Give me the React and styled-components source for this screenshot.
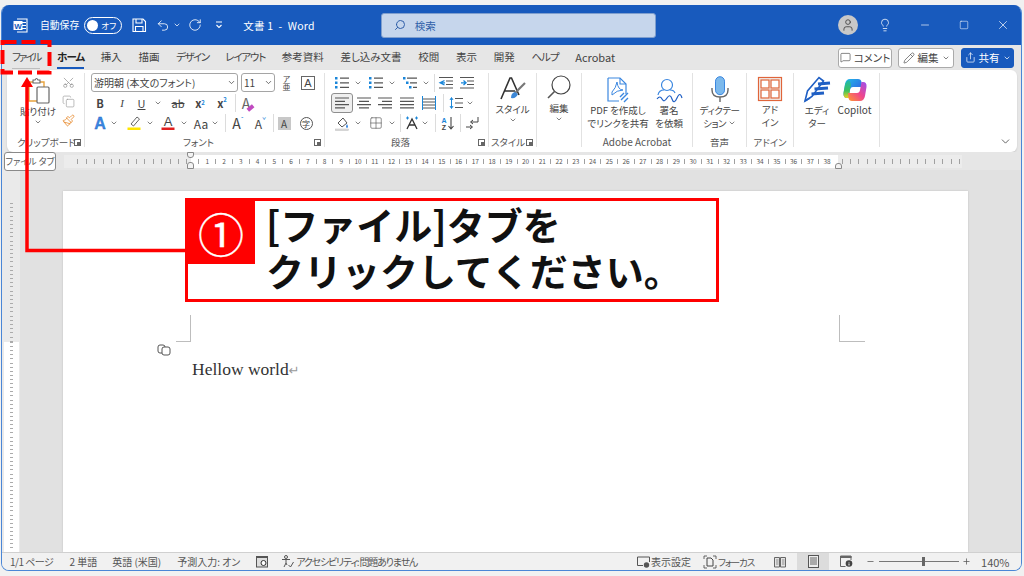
import React from 'react';
import styled, { createGlobalStyle } from 'styled-components';
import {
  Scissors, Search, Lightbulb, Minus, Square, X, Pencil, ChevronDown, User, RotateCw, Undo2, Share,
  Paintbrush, Copy, MessageSquare, Grid2x2, Plus,
} from 'lucide-react';

const UI = '"Noto Sans CJK JP", "Noto Sans", sans-serif';
const Global = createGlobalStyle`
  html, body { margin: 0; padding: 0; background: #f1f1f1; }
  * { box-sizing: border-box; }
  body { font-family: ${UI}; font-feature-settings: "palt"; }
`;

const Stage = styled.div`position: relative; width: 1024px; height: 576px; overflow: hidden; background: #f1f1f1; padding: 5px 2px 5px 1px;`;
const Win = styled.div`display: flex; flex-direction: column; height: 100%; border-radius: 8px; overflow: hidden; background: #e6e6e6; border: 1px solid #4a86d6; border-top: 0;`;

const TitleBar = styled.div`height: 40px; flex: none; background: #185abd; color: #fff; display: flex; align-items: center; position: relative; font-size: 9.8px; padding-left: 11px;`;
const TBItem = styled.div`display: flex; align-items: center; justify-content: center; flex: none; width: ${p => p.$w ? `${p.$w}px` : 'auto'}; margin-left: ${p => p.$ml || 0}px; white-space: nowrap; font-size: ${p => p.$fs || 9.8}px; letter-spacing: ${p => p.$ls || 0}px; color: #fff;`;
const Toggle = styled.div`width: 38px; height: 17px; border: 1.2px solid #fff; border-radius: 9px; margin-left: 5px; display: flex; align-items: center; padding: 0 2px; gap: 3px; font-size: 8.5px; flex: none; white-space: nowrap;`;
const Knob = styled.span`width: 11px; height: 11px; background: #fff; border-radius: 50%; flex: none;`;
const SearchBox = styled.div`width: 275px; height: 25px; background: #c6d6ec; border: 1px solid #7f9fce; border-radius: 3px; margin-left: 66px; flex: none; display: flex; align-items: center; padding-left: 12px; gap: 9px; color: #2f5fa8; font-size: 10.5px;`;
const Avatar = styled.div`width: 20px; height: 20px; background: #c8c8c8; border-radius: 50%; display: flex; align-items: center; justify-content: center; color: #444; flex: none; margin-left: 182px;`;

const TabBar = styled.div`height: 25px; flex: none; background: #e6e6e6; display: flex; align-items: center; padding-left: 10px; position: relative;`;
const Tabs = styled.div`display: flex; gap: 16.7px; flex: 1; font-size: 10.5px; color: #444;`;
const Tab = styled.div`position: relative; padding-bottom: 1px; letter-spacing: ${p => p.$ls || 0}px; font-size: ${p => p.$fs || 10.5}px; font-weight: ${p => p.$on ? 700 : 400}; color: ${p => p.$on ? '#222' : '#444'}; white-space: nowrap;
  ${p => p.$on && `&::after { content: ''; position: absolute; left: 0; right: 0; bottom: -3px; height: 2px; background: #185abd; }`}
  ${p => p.$mute && `&::after { content: ''; position: absolute; left: 0; right: 0; bottom: -3px; height: 1.5px; background: #bdbdbd; }`}`;
const Actions = styled.div`display: flex; gap: 6px; padding-right: 7px; align-items: center;`;
const ActBtn = styled.div`height: 20px; width: ${p => p.$w}px; margin-left: ${p => p.$ml || 0}px; border-radius: 3px; font-size: 10.5px; display: flex; align-items: center; justify-content: center; gap: 3px; white-space: nowrap;
  background: ${p => p.$blue ? '#185abd' : '#fff'}; color: ${p => p.$blue ? '#fff' : '#444'}; border: 1px solid ${p => p.$blue ? '#185abd' : '#aaa'};`;

const Ribbon = styled.div`height: 82px; flex: none; margin: 0 4px 0 5px; background: #fff; border-radius: 6px; box-shadow: 0 1px 2px rgba(0,0,0,.12); display: flex; position: relative; padding-top: 3px; color: #444; font-size: 9.5px;`;
const Group = styled.div`width: ${p => p.$w}px; flex: none; height: 74px; display: flex; flex-direction: column; position: relative; border-right: ${p => p.$last ? 0 : '1.5px solid #e2e2e2'};`;
const GroupBody = styled.div`height: 60px; flex: none; display: flex; flex-direction: ${p => p.$col ? 'column' : 'row'}; padding-left: ${p => p.$pl || 0}px; justify-content: ${p => p.$center ? 'center' : 'flex-start'};`;
const GroupLabel = styled.div`height: 14px; line-height: 14px; text-align: ${p => p.$left ? 'left' : 'center'}; padding-left: ${p => p.$left || 0}px; padding-right: ${p => p.$pr || 0}px; font-size: ${p => p.$fs || 9.5}px; color: #555; white-space: nowrap; margin-top: 2px; position: relative;`;
const Launcher = styled.span`position: absolute; right: 3px; top: 4px; width: 7px; height: 7px; border: 1px solid #666; display: block;
  &::after { content: ''; position: absolute; right: -1px; bottom: -1px; width: 4px; height: 4px; background: #666; }`;
const Row = styled.div`display: flex; align-items: center; height: ${p => p.$h || 21}px; flex: none; margin-left: ${p => p.$ml || 0}px;`;
const Tool = styled.div`width: ${p => p.$w}px; height: 100%; flex: none; display: flex; align-items: center; justify-content: center; gap: ${p => p.$gap ?? 3}px; color: ${p => p.$c || '#444'}; font-size: ${p => p.$fs || 11}px; font-weight: ${p => p.$b ? 700 : 400}; font-style: ${p => p.$i ? 'italic' : 'normal'}; font-family: ${p => p.$serif ? '"Liberation Serif", serif' : 'inherit'}; position: relative;`;
const Selected = styled(Tool)`height: 20px; border: 1.5px solid #8e8e8e; border-radius: 3px; background: #efefef;`;
const Sep = styled.div`width: ${p => p.$w}px; flex: none; display: flex; justify-content: center; height: 18px; &::after { content: ''; width: 1px; background: #dcdcdc; }`;
const Combo = styled.div`width: ${p => p.$w}px; height: 19px; flex: none; margin-left: ${p => p.$ml || 0}px; border: 1px solid #a5a5a5; border-radius: 3px; display: flex; align-items: center; justify-content: space-between; padding: 0 1px 0 2px; font-size: 10px; color: #444; white-space: nowrap;`;
const BigBtn = styled.div`width: ${p => p.$w}px; flex: none; display: flex; flex-direction: column; align-items: center; color: #444; font-size: ${p => p.$fs || 9.5}px; line-height: 12.5px; text-align: center; white-space: nowrap; padding-top: ${p => p.$pt ?? 2}px; letter-spacing: ${p => p.$ls || 0}px;`;
const BigIcon = styled.div`height: ${p => p.$h || 27}px; display: flex; align-items: center; justify-content: center; flex: none; margin-bottom: ${p => p.$mb ?? 3}px;`;
const SmallCol = styled.div`width: ${p => p.$w}px; flex: none; display: flex; flex-direction: column; align-items: center; justify-content: space-between; height: 54px; padding-top: 3px;`;
const Collapse = styled.div`position: absolute; right: 5px; bottom: 4px; color: #444; display: flex;`;

const RulerRow = styled.div`height: 18px; flex: none; background: #e6e6e6; display: flex; align-items: center; padding: 1px 0 0 62px; position: relative;`;
const RulerSeg = styled.div`width: ${p => p.$w}px; height: 13px; flex: none; display: flex; align-items: center; padding-left: ${p => p.$pl || 0}px; justify-content: ${p => p.$end ? 'flex-end' : 'flex-start'}; background: ${p => p.$white ? '#fff' : '#ececec'}; overflow: hidden; position: relative;`;
const RCell = styled.span`width: 8.38px; flex: none; text-align: center; font-size: 6.5px; line-height: 13px; color: #555; display: flex; justify-content: center; overflow: visible; white-space: nowrap;`;
const Tick = styled.span`width: 1px; height: 5px; background: #a0a0a0; display: block; flex: none;`;
const Marker = styled.div`position: absolute; top: ${p => p.$t}px; left: ${p => p.$l}px; width: 7px; height: ${p => p.$h}px; background: #f4f4f4; border: 1px solid #8a8a8a; border-radius: ${p => p.$r || '1px'};`;
const Hint = styled.div`position: absolute; left: 4px; top: 152px; width: 52px; height: 19px; background: #fff; border: 1px solid #8a8a8a; border-radius: 3px; font-size: 9px; color: #555; display: flex; align-items: center; justify-content: center; white-space: nowrap; z-index: 3;`;

const Main = styled.div`flex: 1; min-height: 0; display: flex; background: #e1e1e1; overflow: hidden;`;
const VRuler = styled.div`width: 18px; flex: none; background: #eaeaea; display: flex; flex-direction: column; padding-top: 33px; align-items: center; margin-right: 43px; position: relative;`;
const VTicks = styled.div`width: 15px; height: 139px; flex: none; display: flex; flex-direction: column; align-items: center; justify-content: space-between; &>i { display: block; width: 3px; height: 1px; background: #ababab; }`;
const VWhite = styled(VTicks)`height: 211px; background: #fff;`;
const Page = styled.div`width: 905px; flex: none; background: #fff; margin-top: 21px; box-shadow: 0 0 2px rgba(0,0,0,.15); color: #333;`;
const Marks = styled.div`display: flex; justify-content: space-between; padding: 124px 103px 0 113px;`;
const Mark = styled.div`width: ${p => p.$w}px; height: 27px; ${p => p.$right ? 'border-left' : 'border-right'}: 1px solid #bdbdbd; border-bottom: 1px solid #bdbdbd;`;
const Body = styled.div`padding: 15px 0 0 129px; position: relative; font-family: "Liberation Serif", serif; font-size: 17.5px; line-height: 24px; color: #333; font-feature-settings: normal;`;
const Ret = styled.span`color: #999; font-size: 13px; font-family: "DejaVu Sans", sans-serif;`;
const CoIcon = styled.div`position: absolute; left: 94px; top: 2px; display: flex;`;

const Status = styled.div`height: 18px; flex: none; background: #f1f1f1; border-top: 1px solid #d0d0d0; display: flex; align-items: center; font-size: 10px; color: #555; padding-left: 8px; position: relative;`;
const SItem = styled.div`flex: none; display: flex; align-items: center; justify-content: center; gap: ${p => p.$gap ?? 1}px; white-space: nowrap; letter-spacing: ${p => p.$ls || 0}px; width: ${p => p.$w ? `${p.$w}px` : 'auto'}; margin-left: ${p => p.$ml || 0}px; height: 100%; font-size: ${p => p.$fs || 10}px; background: ${p => p.$on ? '#dcdcdc' : 'transparent'};`;
const Slider = styled.div`width: 80px; height: 1px; background: #777; flex: none; margin-left: 4px; position: relative; &::after { content: ''; position: absolute; left: 43px; top: -4px; width: 3px; height: 9px; background: #666; }`;

const CalloutBox = styled.div`position: absolute; left: 185px; top: 198px; width: 534px; height: 104px; background: #fff; border: 3.5px solid #f00; display: flex; align-items: flex-start; z-index: 5;`;
const Badge = styled.div`width: 68px; height: 64px; background: #f00; color: #fff; flex: none; display: flex; align-items: center; justify-content: center; font-size: 46px; font-weight: 400; -webkit-text-stroke: .3px #fff; line-height: 1; margin: -1px 0 0 -1px;`;
const CalloutText = styled.div`font-size: 38px; font-weight: 700; line-height: 46px; color: #111; padding: 0 0 0 11px; white-space: nowrap; font-feature-settings: normal; margin-top: 0;`;
const Overlay = styled.svg`position: absolute; left: 0; top: 0; z-index: 4; pointer-events: none;`;

const Chev = ({ s = 8, c = '#555' }) => <ChevronDown size={s} color={c} strokeWidth={2.2} style={{ flex: 'none' }} />;
const Svg = ({ w = 14, h = 14, children, vb }) => <svg width={w} height={h} viewBox={vb || `0 0 ${w} ${h}`} fill="none" style={{ flex: 'none', overflow: 'visible' }}>{children}</svg>;

const Lines = ({ widths, x = [0, 0, 0, 0], c = '#555' }) => (
  <Svg><g stroke={c} strokeWidth="1.2">{widths.map((wd, i) => <line key={i} x1={x[i]} x2={x[i] + wd} y1={2 + i * 3.3} y2={2 + i * 3.3} />)}</g></Svg>
);
const BulletList = ({ tree }) => (
  <Svg>
    <g fill="#1a86d9">
      <rect x="0" y="1" width="2.5" height="2.5" /><rect x={tree ? 3 : 0} y="5.5" width="2.5" height="2.5" /><rect x={tree ? 6 : 0} y="10" width="2.5" height="2.5" />
    </g>
    <g stroke="#555" strokeWidth="1.2"><line x1={tree ? 4 : 5} x2="14" y1="2.2" y2="2.2" /><line x1={tree ? 7 : 5} x2="14" y1="6.8" y2="6.8" /><line x1={tree ? 10 : 5} x2="14" y1="11.3" y2="11.3" /></g>
  </Svg>
);
const Indent = ({ rev }) => (
  <Svg>
    <g stroke="#555" strokeWidth="1.1"><line x1="0" x2="14" y1="1.5" y2="1.5" /><line x1="7" x2="14" y1="5" y2="5" /><line x1="7" x2="14" y1="8.5" y2="8.5" /><line x1="0" x2="14" y1="12" y2="12" /></g>
    <path d={rev ? 'M5.5 4.5 L1 6.8 L5.5 9 M1 6.8 H6' : 'M1 6.8 H5.5 M3.5 4.5 L6 6.8 L3.5 9'} stroke="#1a86d9" strokeWidth="1.3" />
  </Svg>
);
const PaperClip = () => (
  <Svg w={24} h={27}>
    <path d="M3 5 H18 V24 H3 Z" stroke="#e8a33d" strokeWidth="1.4" />
    <path d="M7 6 V3 H9 Q10.5 0 12 3 H14 V6 Z" fill="#fff" stroke="#666" strokeWidth="1.1" />
    <rect x="11" y="10" width="12" height="16" rx="1" fill="#fff" stroke="#666" strokeWidth="1.2" />
  </Svg>
);
const WordIcon = () => (
  <Svg w={15} h={15}>
    <path d="M4 1 H14 V14 H4" stroke="#fff" strokeWidth="1.1" />
    <g stroke="#fff"><line x1="9" x2="13" y1="4.5" y2="4.5" /><line x1="9" x2="13" y1="7.5" y2="7.5" /><line x1="9" x2="13" y1="10.5" y2="10.5" /></g>
    <rect x="0.5" y="3" width="9" height="9" fill="#fff" />
    <text x="5" y="10.5" textAnchor="middle" fontSize="8" fontWeight="700" fill="#185abd" fontFamily="Liberation Sans, sans-serif">W</text>
  </Svg>
);
const SaveIcon = () => (
  <Svg>
    <path d="M1 1 H11 L13.5 3.5 V13.5 H1 Z" stroke="#fff" strokeWidth="1.1" />
    <path d="M4 1 V5 H10 V1 M3.5 13.5 V8.5 H11 V13.5" stroke="#fff" strokeWidth="1.1" />
  </Svg>
);
const QuickMenu = () => (
  <Svg w={8} h={8}><path d="M1 1 H7 M1.5 4 L4 6.5 L6.5 4" stroke="#fff" strokeWidth="1.1" /></Svg>
);
const CopilotIcon = ({ s = 24 }) => (
  <svg width={s} height={s} viewBox="0 0 24 24" style={{ flex: 'none' }}>
    <defs>
      <linearGradient id="cg1" x1="0" y1="0" x2="1" y2="1"><stop offset="0" stopColor="#1fc2e8" /><stop offset=".6" stopColor="#2f78e6" /><stop offset="1" stopColor="#6a4fe6" /></linearGradient>
      <linearGradient id="cg2" x1="0" y1="1" x2="1" y2="0"><stop offset="0" stopColor="#ff9a2e" /><stop offset=".5" stopColor="#f0468b" /><stop offset="1" stopColor="#9a4ff0" /></linearGradient>
      <linearGradient id="cg3" x1="0" y1="0" x2="0" y2="1"><stop offset="0" stopColor="#1fb8b0" /><stop offset=".6" stopColor="#3fc25a" /><stop offset="1" stopColor="#f2d020" /></linearGradient>
    </defs>
    <path d="M7 1 H15 Q18 1 18.5 4 L19.5 9 H10 Q7.5 9 7 12 L5.5 20 H4 Q0 20 0.5 15 L2 6 Q3 1 7 1Z" fill="url(#cg1)" />
    <path d="M2 7 Q3 3 6 2 Q8.5 5 7.5 9 L5.5 20 H4 Q0 20 .5 15Z" fill="url(#cg3)" />
    <path d="M17 23 H9 Q6 23 5.5 20 L5 15 H14 Q16.5 15 17 12 L18.5 4 H20 Q24 4 23.5 9 L22 18 Q21 23 17 23Z" fill="url(#cg2)" />
  </svg>
);
const EditorIcon = () => (
  <Svg w={26} h={26}>
    <path d="M1 25 L3.5 15 L15 1.5 L19.5 5 L8 20.5 Z" fill="#fff" stroke="#1f5fc4" strokeWidth="1.6" />
    <path d="M1 25 L6 22" stroke="#1f5fc4" strokeWidth="1.6" />
    <g stroke="#1f5fc4" strokeWidth="3"><line x1="14" x2="26" y1="8" y2="7" /><line x1="10.5" x2="24" y1="13" y2="12" /><line x1="7.5" x2="20" y1="18" y2="17" /></g>
  </Svg>
);
const StylesIcon = () => (
  <Svg w={26} h={24}>
    <path d="M1 22 L10 1 H11.5 L19 18 M4.5 14 H15" stroke="#333" strokeWidth="1.6" />
    <path d="M25 6 L15 16" stroke="#777" strokeWidth="2.2" />
    <path d="M15 15 Q11 16 11 21 Q16 22 18 17 Z" fill="#3c87d6" />
  </Svg>
);
const MagIcon = () => (
  <Svg w={24} h={24}>
    <circle cx="14" cy="10" r="9" stroke="#444" strokeWidth="1.2" />
    <line x1="7.5" y1="16.5" x2="1" y2="23" stroke="#555" strokeWidth="1.6" />
  </Svg>
);
const PdfIcon = () => (
  <Svg w={22} h={25}>
    <path d="M1 1 H13 L19 7 V17 M12 24 H1 V1" stroke="#3b87e0" strokeWidth="1.2" />
    <path d="M13 1 V7 H19" stroke="#3b87e0" strokeWidth="1.1" />
    <path d="M5 15 Q9 11 10 5 Q11 13 16 13 Q10 13 5 18 Z" stroke="#3b87e0" strokeWidth="1" />
    <path d="M14 23 L21 16 M13 20 L17 16 M17 25 L21 21" stroke="#3b87e0" strokeWidth="1.4" />
  </Svg>
);
const SignIcon = () => (
  <Svg w={26} h={24}>
    <circle cx="11" cy="7" r="5.5" stroke="#3b87e0" strokeWidth="1.2" />
    <path d="M2 17 Q3 12 8 12 M14 12 Q18 12 19 15" stroke="#3b87e0" strokeWidth="1.2" />
    <path d="M1 21 Q4 17 6 21 T11 20 T16 21 T21 20 T26 20" stroke="#1f5fc4" strokeWidth="1.2" />
  </Svg>
);
const MicIcon = () => (
  <Svg w={20} h={26}>
    <rect x="5.5" y="0.7" width="9" height="18" rx="4.5" fill="#7cb9ec" stroke="#3b87e0" />
    <path d="M2 12 V14 Q2 21 10 21 Q18 21 18 14 V12 M10 21 V26" stroke="#666" strokeWidth="1.4" />
  </Svg>
);
const AddinIcon = () => (
  <Svg w={24} h={24}>
    <rect x="0.5" y="0.5" width="23" height="23" fill="#f0f0f0" stroke="#e0653a" strokeWidth="1.2" />
    <g stroke="#e0653a" strokeWidth="1.2" fill="#fff"><rect x="3" y="3" width="8" height="8" /><rect x="13" y="3" width="8" height="8" /><rect x="3" y="13" width="8" height="8" /><rect x="13" y="13" width="8" height="8" /></g>
  </Svg>
);
const PhoneticIcon = () => <Tool $w={22} $fs={8}><span style={{ lineHeight: '8px', textAlign: 'center', writingMode: 'vertical-rl' }}>ア亜</span></Tool>;
const ColorA = ({ bar }) => (
  <Svg w={14} h={16}>
    <text x="7" y="11" textAnchor="middle" fontSize="13" fill="#444" fontFamily="Liberation Sans, sans-serif">A</text>
    <rect x="0.5" y="12.5" width="13" height="2.5" fill={bar} />
  </Svg>
);
const TrackIcon = () => (
  <Svg w={12} h={12}><rect x=".5" y="1.5" width="11" height="9.5" stroke="#555" fill="#ddd" /><line x1="0" x2="12" y1="1" y2="1" stroke="#555" strokeWidth="2" /><circle cx="7.5" cy="7" r="2.5" fill="#fff" stroke="#333" /></Svg>
);
const A11yIcon = () => (
  <Svg w={13} h={13}><circle cx="5" cy="2" r="1.5" stroke="#555" /><path d="M1 4.5 H9 M5 4.5 V8 L3 12 M5 8 L6 10" stroke="#555" /><path d="M7.5 10 L9.5 12 L12.5 7" stroke="#555" /></Svg>
);
const DisplayIcon = () => (
  <Svg w={13} h={12}><path d="M6 9.5 H.5 V1 H12.5 V6" stroke="#555" /><circle cx="9.5" cy="9" r="2.7" fill="#555" /></Svg>
);
const FocusIcon = () => (
  <Svg w={12} h={12}><path d="M0 3 V0 H3 M9 0 H12 V3 M0 9 V12 H3 M9 12 H12 V9" stroke="#555" strokeWidth=".9" /><path d="M3 2 H7 L9 4 V10 H3 Z" stroke="#444" /></Svg>
);
const ReadIcon = () => (
  <Svg w={12} h={12}><path d="M.5 1.5 H5.5 V11 H.5 Z M6.5 1.5 H11.5 V11 H6.5 Z" stroke="#666" fill="#e4e4e4" /><path d="M2 4 H4.5 M2 6 H4.5 M2 8 H4.5 M8 4 H10.5 M8 6 H10.5 M8 8 H10.5" stroke="#777" strokeWidth=".8" /></Svg>
);
const PrintIcon = () => (
  <Svg w={11} h={13}><rect x=".5" y=".5" width="10" height="12" stroke="#555" fill="#eee" /><path d="M2 3 H9 M2 5 H9 M2 7 H9 M2 9 H9" stroke="#555" strokeWidth=".9" /></Svg>
);
const WebIcon = () => (
  <Svg w={13} h={13}><path d="M5.5 11.5 H.5 V1 H11 V5" stroke="#666" /><line x1="0" x2="11.5" y1="2" y2="2" stroke="#666" strokeWidth="2" /><circle cx="9" cy="8.5" r="3.3" fill="#444" /><path d="M9 7 V7.5 M9 8.5 V10.5" stroke="#fff" strokeWidth="1" /></Svg>
);

const rulerCells = (from, to) => {
  const cells = [];
  for (let i = from; i <= to; i++) {
    cells.push(<RCell key={`t${i}`}><Tick /></RCell>);
    cells.push(<RCell key={`n${i}`}>{i + 1}</RCell>);
  }
  return cells;
};
const plainTicks = n => Array.from({ length: n }, (_, i) => <RCell key={i}><Tick /></RCell>);
const vTicks = n => Array.from({ length: n }, (_, i) => <i key={i} />);

function CopilotMini() {
  return (
    <svg width="14" height="12" viewBox="0 0 14 12" fill="none">
      <rect x="1" y="1" width="7" height="8" rx="2" stroke="#555" />
      <rect x="5" y="3" width="8" height="8" rx="2" fill="#fff" stroke="#555" />
    </svg>
  );
}

export default function App() {
  return (
    <Stage>
      <Global />
      <Win>
        <TitleBar>
          <WordIcon />
          <TBItem $ml={12}>自動保存</TBItem>
          <Toggle><Knob />オフ</Toggle>
          <TBItem $w={14} $ml={10}><SaveIcon /></TBItem>
          <TBItem $w={14} $ml={10}><Undo2 size={15} strokeWidth={1.4} /></TBItem>
          <TBItem $w={8} $ml={3}><Chev c="#fff" /></TBItem>
          <TBItem $w={14} $ml={7}><RotateCw size={14} strokeWidth={1.4} /></TBItem>
          <TBItem $w={10} $ml={12}><QuickMenu /></TBItem>
          <TBItem $ml={19} $fs={10.5} $ls={0.25}>文書 1&nbsp;&nbsp;-&nbsp;&nbsp;Word</TBItem>
          <SearchBox><Search size={12} color="#2f5fa8" style={{ transform: 'scaleX(-1)' }} />検索</SearchBox>
          <Avatar><User size={14} strokeWidth={1.5} /></Avatar>
          <TBItem $w={16} $ml={19}><Lightbulb size={14} strokeWidth={1.3} /></TBItem>
          <TBItem $w={14} $ml={25}><Minus size={12} strokeWidth={1.3} /></TBItem>
          <TBItem $w={14} $ml={25}><Square size={10} strokeWidth={1.3} /></TBItem>
          <TBItem $w={14} $ml={25}><X size={14} strokeWidth={1.2} /></TBItem>
        </TitleBar>
        <TabBar>
          <Tabs>
            <Tab $mute $ls={-2}>ファイル</Tab><Tab $on $ls={-1}>ホーム</Tab><Tab>挿入</Tab><Tab>描画</Tab><Tab $ls={-1.5}>デザイン</Tab><Tab $ls={-1.2}>レイアウト</Tab><Tab>参考資料</Tab><Tab>差し込み文書</Tab><Tab>校閲</Tab><Tab>表示</Tab><Tab>開発</Tab><Tab $ls={-1}>ヘルプ</Tab><Tab $fs={11}>Acrobat</Tab>
          </Tabs>
          <Actions>
            <ActBtn $w={54}><MessageSquare size={11} strokeWidth={1.4} />コメント</ActBtn>
            <ActBtn $w={56}><Pencil size={12} strokeWidth={1.3} />編集<Chev /></ActBtn>
            <ActBtn $w={53} $ml={1} $blue><Share size={11} strokeWidth={1.5} />共有<Chev c="#fff" /></ActBtn>
          </Actions>
        </TabBar>
        <Ribbon>
          <Group $w={78}>
            <GroupBody $pl={6}>
              <BigBtn $w={50} $pt={4}>
                <BigIcon $h={27} $mb={1}><PaperClip /></BigIcon>
                貼り付け
                <Chev />
              </BigBtn>
              <SmallCol $w={10}>
                <Scissors size={13} color="#888" strokeWidth={1.2} style={{ transform: 'rotate(-90deg)', flex: 'none' }} />
                <Copy size={13} color="#999" strokeWidth={1.2} style={{ flex: 'none' }} />
                <Paintbrush size={13} color="#e8913a" strokeWidth={1.6} style={{ flex: 'none' }} />
              </SmallCol>
            </GroupBody>
            <GroupLabel $left={10}>クリップボード<Launcher /></GroupLabel>
          </Group>
          <Group $w={240}>
            <GroupBody $col $pl={6}>
              <Row $h={19}>
                <Combo $w={147}>游明朝 (本文のフォント)<Chev s={9} /></Combo>
                <Combo $w={34} $ml={3}>11<Chev s={9} /></Combo>
                <PhoneticIcon />
                <Tool $w={22}><Svg w={14} h={14}><rect x=".5" y=".5" width="13" height="13" stroke="#666" /><text x="7" y="11" textAnchor="middle" fontSize="11" fill="#444" fontFamily="Liberation Sans, sans-serif">A</text></Svg></Tool>
              </Row>
              <Row $h={21} $ml={-2}>
                <Tool $w={22} $b>B</Tool>
                <Tool $w={22} $i $serif>I</Tool>
                <Tool $w={34} $gap={9}><span style={{ textDecoration: 'underline' }}>U</span><Chev /></Tool>
                <Tool $w={22} style={{ textDecoration: 'line-through' }}>ab</Tool>
                <Tool $w={22} $b $gap={0}>x<sub style={{ fontSize: 6, color: '#1a86d9' }}>2</sub></Tool>
                <Tool $w={22} $b $gap={0}>x<sup style={{ fontSize: 6, color: '#1a86d9', marginBottom: 6 }}>2</sup></Tool>
                <Sep $w={4} />
                <Tool $w={18} $fs={14} $c="#666">A<span style={{ position: 'absolute', right: 1, bottom: 3, width: 7, height: 4, background: '#c04ac0', transform: 'rotate(-40deg)' }} /></Tool>
              </Row>
              <Row $h={20}>
                <Tool $w={29} $gap={3}><Svg w={14} h={15}><text x="7" y="13" textAnchor="middle" fontSize="16" fontWeight="700" fill="#3b87e0" stroke="#1f5fc4" strokeWidth=".3" fontFamily="Liberation Sans, sans-serif">A</text></Svg><Chev /></Tool>
                <Tool $w={41} $gap={5}><Svg w={14} h={16}><path d="M4 9 L10 2 L12.5 4 L6.5 11 Z" stroke="#666" /><rect x=".5" y="12.5" width="13" height="2.5" fill="#ffe600" /></Svg><Chev /></Tool>
                <Tool $w={27} $gap={5}><ColorA bar="#e02020" /><Chev /></Tool>
                <Tool $w={36} $gap={2} $fs={12}><span style={{ width: 16, textAlign: 'center' }}>Aa</span><Chev /></Tool>
                <Sep $w={3} />
                <Tool $w={22} $fs={14} $gap={0}>A<span style={{ color: '#1a86d9', fontSize: 7, marginBottom: 8 }}>ˆ</span></Tool>
                <Tool $w={23} $fs={12} $gap={0}>A<span style={{ color: '#1a86d9', fontSize: 7, marginBottom: 6 }}>ˇ</span></Tool>
                <Sep $w={2} />
                <Tool $w={20}><span style={{ width: 13, height: 13, background: '#c8c8c8', fontSize: 10, lineHeight: '13px', textAlign: 'center' }}>A</span></Tool>
                <Tool $w={24}><span style={{ width: 13, height: 13, border: '1px solid #555', borderRadius: '50%', fontSize: 8, lineHeight: '11px', textAlign: 'center' }}>字</span></Tool>
              </Row>
            </GroupBody>
            <GroupLabel $pr={12}>フォント<Launcher /></GroupLabel>
          </Group>
          <Group $w={164}>
            <GroupBody $col $pl={6}>
              <Row $h={19}>
                <Tool $w={34} $gap={5}><BulletList /><Chev /></Tool>
                <Tool $w={34} $gap={5}><BulletList /><Chev /></Tool>
                <Tool $w={34} $gap={5}><BulletList tree /><Chev /></Tool>
                <Sep $w={2} />
                <Tool $w={22}><Indent rev /></Tool>
                <Tool $w={20}><Indent /></Tool>
              </Row>
              <Row $h={21}>
                <Selected $w={22}><Lines widths={[14, 10, 14, 10]} /></Selected>
                <Tool $w={21}><Lines widths={[14, 10, 14, 10]} x={[0, 2, 0, 2]} /></Tool>
                <Tool $w={22}><Lines widths={[14, 10, 14, 10]} x={[0, 4, 0, 4]} /></Tool>
                <Tool $w={22}><Lines widths={[14, 14, 14, 14]} /></Tool>
                <Tool $w={22}><Svg><g stroke="#1a86d9" strokeWidth="1"><line x1=".5" x2=".5" y1="0" y2="14" /><line x1="13.5" x2="13.5" y1="0" y2="14" /></g><g stroke="#555"><line x1="1" x2="13" y1="3" y2="3" /><line x1="1" x2="13" y1="6" y2="6" /><line x1="1" x2="13" y1="9" y2="9" /><line x1="1" x2="13" y1="12" y2="12" /></g></Svg></Tool>
                <Sep $w={6} />
                <Tool $w={30}><Svg><path d="M2.5 2 V12 M1 4 L2.5 1.5 L4 4 M1 10 L2.5 12.5 L4 10" stroke="#1a86d9" /><g stroke="#555"><line x1="6" x2="14" y1="2.5" y2="2.5" /><line x1="6" x2="14" y1="7" y2="7" /><line x1="6" x2="14" y1="11.5" y2="11.5" /></g></Svg><Chev /></Tool>
              </Row>
              <Row $h={20}>
                <Tool $w={34} $gap={5}><Svg w={14} h={15}><path d="M3 7 L8 2 L12 7 L7 11 Z" stroke="#555" /><path d="M12 8 Q14 11 12 12 Q10 11 12 8" fill="#3b87e0" /><rect x=".5" y="13" width="13" height="1.5" fill="#ddd" stroke="#bbb" strokeWidth=".5" /></Svg><Chev /></Tool>
                <Tool $w={34} $gap={5}><Grid2x2 size={14} color="#555" strokeWidth={1.1} /><Chev /></Tool>
                <Sep $w={2} />
                <Tool $w={32} $gap={2}><Svg><path d="M2 13 L7 3 L12 13 M4 9 H10" stroke="#333" strokeWidth="1.3" /><path d="M1 2 H4 M2.5 .5 V3.5 M10 2 H13 M11.5 .5 V3.5" stroke="#1a86d9" /></Svg><Chev /></Tool>
                <Sep $w={4} />
                <Tool $w={22}><Svg><text x="3" y="6.5" fontSize="7" fontWeight="700" fill="#1a86d9" textAnchor="middle" fontFamily="Liberation Sans, sans-serif">A</text><text x="3" y="14" fontSize="7" fontWeight="700" fill="#444" textAnchor="middle" fontFamily="Liberation Sans, sans-serif">Z</text><path d="M10 1 V13 M7.5 10 L10 13 L12.5 10" stroke="#444" strokeWidth="1.1" /></Svg></Tool>
                <Sep $w={3} />
                <Tool $w={20}><Svg><path d="M13 1 V6 H6 M8 4 L5.5 6 L8 8" stroke="#444" /><path d="M1 11 H7 M5 9 L7.5 11 L5 13" stroke="#444" /></Svg></Tool>
              </Row>
            </GroupBody>
            <GroupLabel $pr={12}>段落<Launcher /></GroupLabel>
          </Group>
          <Group $w={48}>
            <GroupBody $center>
              <BigBtn $w={46} $pt={4}>
                <BigIcon $h={24} $mb={2}><StylesIcon /></BigIcon>
                スタイル
                <Chev />
              </BigBtn>
            </GroupBody>
            <GroupLabel $left={2}>スタイル<Launcher /></GroupLabel>
          </Group>
          <Group $w={45}>
            <GroupBody $center>
              <BigBtn $w={44}>
                <BigIcon $h={24} $mb={3}><MagIcon /></BigIcon>
                編集
                <Chev />
              </BigBtn>
            </GroupBody>
            <GroupLabel />
          </Group>
          <Group $w={111}>
            <GroupBody>
              <BigBtn $w={72} $pt={4}><BigIcon $h={25} $mb={2}><PdfIcon /></BigIcon>PDF を作成し<br />でリンクを共有</BigBtn>
              <BigBtn $w={30} $pt={4}><BigIcon $h={25} $mb={2}><SignIcon /></BigIcon>署名<br />を依頼</BigBtn>
            </GroupBody>
            <GroupLabel $fs={10}>Adobe Acrobat</GroupLabel>
          </Group>
          <Group $w={54}>
            <GroupBody $center>
              <BigBtn $w={52} $ls={-0.4}><BigIcon $h={27} $mb={2}><MicIcon /></BigIcon>ディクテー<span>ション <Chev /></span></BigBtn>
            </GroupBody>
            <GroupLabel>音声</GroupLabel>
          </Group>
          <Group $w={47}>
            <GroupBody $center>
              <BigBtn $w={40} $pt={3}><BigIcon $h={25} $mb={2}><AddinIcon /></BigIcon>アド<br />イン</BigBtn>
            </GroupBody>
            <GroupLabel>アドイン</GroupLabel>
          </Group>
          <Group $w={86}>
            <GroupBody>
              <BigBtn $w={46} $pt={2}><BigIcon $h={27} $mb={2}><EditorIcon /></BigIcon>エディ<br />ター</BigBtn>
              <BigBtn $w={29} $fs={10} $pt={4}><BigIcon $h={25} $mb={2}><CopilotIcon /></BigIcon>Copilot</BigBtn>
            </GroupBody>
            <GroupLabel />
          </Group>
          <Collapse><ChevronDown size={13} strokeWidth={1.5} /></Collapse>
        </Ribbon>
        <RulerRow>
          <RulerSeg $w={127} $end>{plainTicks(14)}</RulerSeg>
          <RulerSeg $w={647} $white $pl={3.7}>{rulerCells(0, 37)}</RulerSeg>
          <RulerSeg $w={124}>{plainTicks(15)}</RulerSeg>
          <Marker $t={0} $l={185} $h={6} $r="0 0 3px 3px" />
          <Marker $t={10} $l={185} $h={7} $r="3px 3px 0 0" />
          <Marker $t={11} $l={833} $h={6} $r="3px 3px 0 0" />
        </RulerRow>
        <Main>
          <VRuler>
            <VTicks>{vTicks(34)}</VTicks>
            <VWhite>{vTicks(52)}</VWhite>
          </VRuler>
          <Page>
            <Marks><Mark $w={15} /><Mark $w={26} $right /></Marks>
            <Body>
              <CoIcon><CopilotMini /></CoIcon>
              Hellow world<Ret>↵</Ret>
            </Body>
          </Page>
        </Main>
        <Status>
          <SItem $ls={-0.5}>1/1 ページ</SItem>
          <SItem $ml={16}>2 単語</SItem>
          <SItem $ml={15}>英語 (米国)</SItem>
          <SItem $ml={16}>予測入力: オン</SItem>
          <SItem $w={14} $ml={15}><TrackIcon /></SItem>
          <SItem $ml={12} $ls={-1.2} $gap={2}><A11yIcon />アクセシビリティ: 問題ありません</SItem>
          <SItem $ml={220}><DisplayIcon />表示設定</SItem>
          <SItem $ml={13} $fs={9.5} $ls={-1.2} $gap={2}><FocusIcon />フォーカス</SItem>
          <SItem $w={14} $ml={19}><ReadIcon /></SItem>
          <SItem $w={32} $ml={10} $on><PrintIcon /></SItem>
          <SItem $w={14} $ml={10}><WebIcon /></SItem>
          <SItem $w={10} $ml={12}><Minus size={9} /></SItem>
          <Slider />
          <SItem $w={10} $ml={2}><Plus size={9} /></SItem>
          <SItem $ml={10} $fs={11}>140%</SItem>
        </Status>
      </Win>
      <Hint>ファイル タブ</Hint>
      <Overlay width="1024" height="576">
        <rect x="2.5" y="42" width="47" height="30.5" stroke="#f00" strokeWidth="4" fill="none" strokeDasharray="14 5" />
        <path d="M27 84 V250.5 H186" stroke="#f00" strokeWidth="3.5" fill="none" />
        <path d="M27 77 L33 87 H21 Z" fill="#f00" />
      </Overlay>
      <CalloutBox>
        <Badge>①</Badge>
        <CalloutText>[ファイル]タブを<br />クリックしてください。</CalloutText>
      </CalloutBox>
    </Stage>
  );
}
